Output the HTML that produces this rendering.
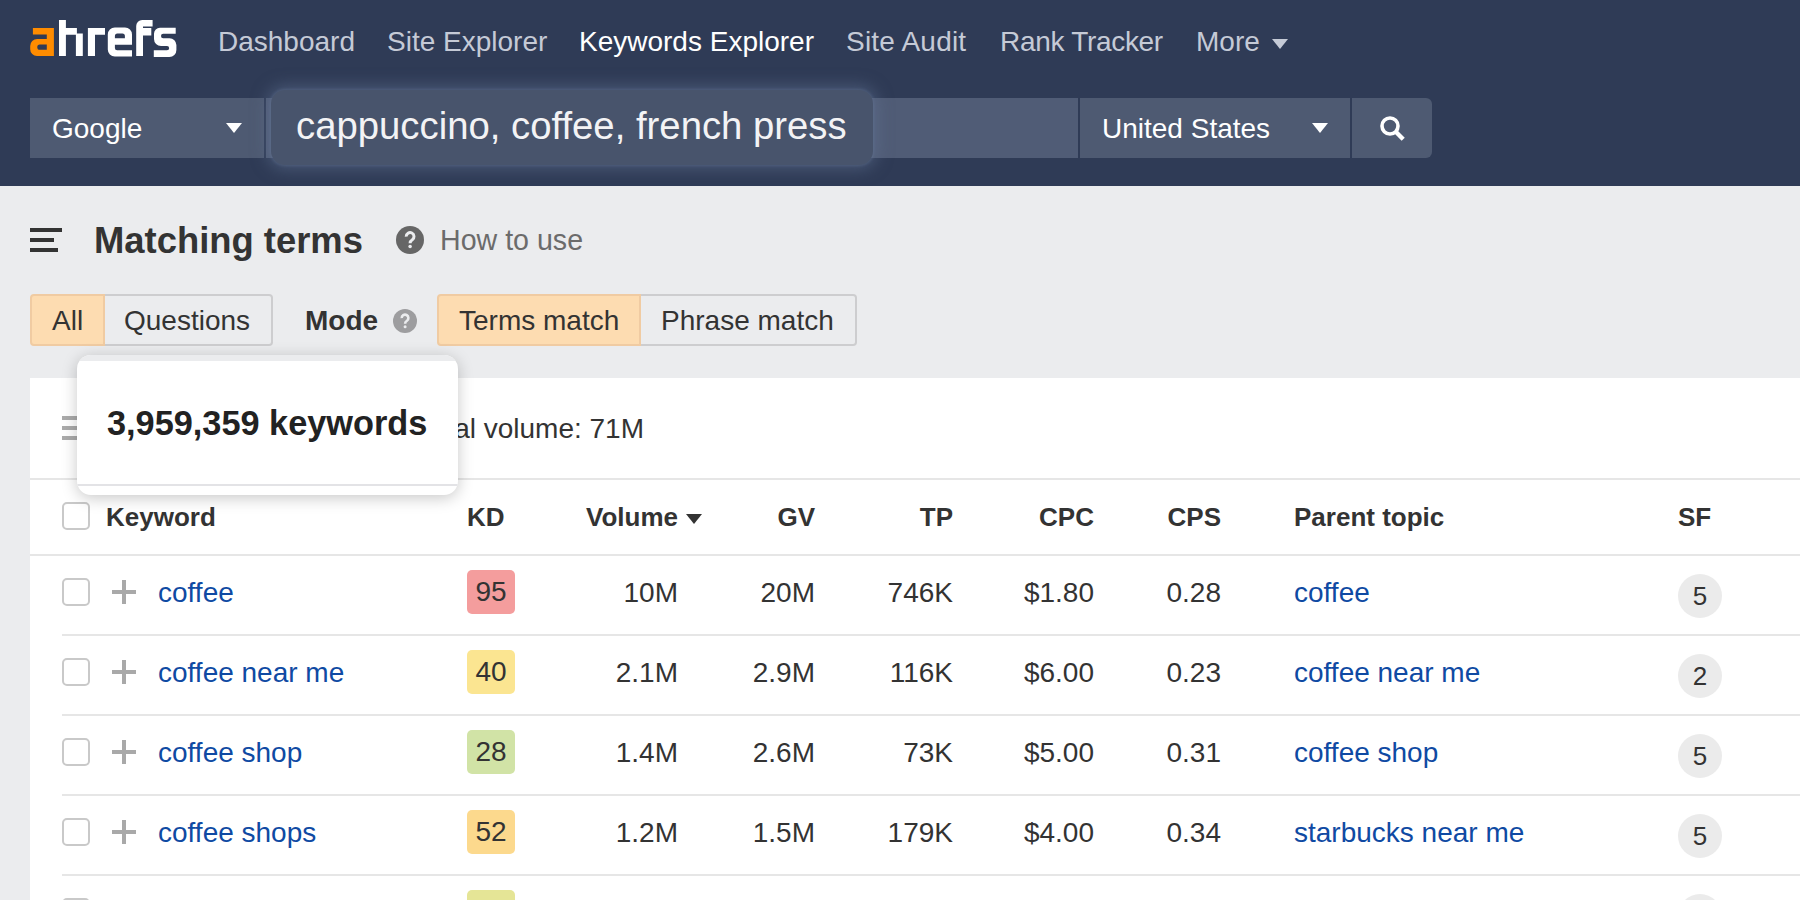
<!DOCTYPE html>
<html><head><meta charset="utf-8">
<style>
*{margin:0;padding:0;box-sizing:border-box}
html,body{width:1800px;height:900px;overflow:hidden;background:#ebecee;font-family:"Liberation Sans",sans-serif}
.t{position:absolute;white-space:nowrap;line-height:normal}
.abs{position:absolute}
#hdr{position:absolute;left:0;top:0;width:1800px;height:186px;background:#2f3b56}
.nav{font-size:28px;color:#c5cad6}
.nav.act{color:#fff}
.tri{position:absolute;width:0;height:0;border-left:8px solid transparent;border-right:8px solid transparent;border-top:10px solid #fff}
.sbox{position:absolute;top:98px;height:60px;background:#4e5a72}
.btn{position:absolute;top:294px;height:52px;border:2px solid #cdcdcf;font-size:28px;color:#333}
.panel{position:absolute;left:30px;top:378px;width:1770px;height:522px;background:#fff}
.hd{font-size:26px;font-weight:bold;color:#333}
.cell{font-size:28px;color:#333}
.lnk{font-size:28px;color:#0f4aa3}
.cb{position:absolute;left:62px;width:28px;height:28px;border:2px solid #c9c9c9;border-radius:5px;background:#fff}
.plus{position:absolute;left:112px;width:24px;height:24px}
.plus:before{content:"";position:absolute;left:10px;top:0;width:4px;height:24px;background:#a9a9a9}
.plus:after{content:"";position:absolute;left:0;top:10px;width:24px;height:4px;background:#a9a9a9}
.kd{position:absolute;left:467px;width:48px;height:44px;border-radius:5px;font-size:28px;color:#333;text-align:center;line-height:44px}
.sf{position:absolute;left:1678px;width:44px;height:44px;border-radius:50%;background:#ebebeb;font-size:26px;color:#333;text-align:center;line-height:44px}
.div{position:absolute;left:62px;width:1738px;height:2px;background:#e6e6e6}
.r{text-align:right}
</style></head>
<body>
<div id="hdr">
  <svg class="abs" style="left:0;top:0" width="200" height="80" viewBox="0 0 200 80">
    <path fill="#ff8c00" fill-rule="evenodd" d="M32.9 28H53.9V56.1H37A6.8 6.8 0 0 1 30.2 49.3V46A7 7 0 0 1 37.2 39H46.8V34.6H32.9Z M39.8 44.6H46.8V49.7H39.8A2.55 2.55 0 0 1 37.25 47.15A2.55 2.55 0 0 1 39.8 44.6Z"/>
    <path fill="#fff" d="M59 19.9H65.9V28H76.9V33.6H82.8V56.1H75.9V34.8H65.9V56.1H59Z M87.9 28H105V34.8H95V56.1H87.9Z"/>
    <path fill="#fff" fill-rule="evenodd" d="M114.8 27.5H125A7 7 0 0 1 132 34.5V44.8H114.9V48A2.2 2.2 0 0 0 117.1 50.2H132V56.6H114.8A7 7 0 0 1 107.8 49.6V34.5A7 7 0 0 1 114.8 27.5Z M117.4 33.6H122.4A2.5 2.5 0 0 1 124.9 36.1V38.2H114.9V36.1A2.5 2.5 0 0 1 117.4 33.6Z"/>
    <path fill="#fff" d="M142.2 19.9H152.6V26.5H143V28H151.3V35.6H143V56.1H136.2V26A6.1 6.1 0 0 1 142.2 19.9Z"/>
    <path fill="#fff" d="M160 27.7H175.7V33.8H163.2A2.2 2.2 0 0 0 161 36A2.2 2.2 0 0 0 163.2 38.2H169.5A6.9 6.9 0 0 1 176.4 45.1V50A7 7 0 0 1 169.4 57H153.8V50.3H167A2.15 2.15 0 0 0 169.15 48.15A2.15 2.15 0 0 0 167 46H161A7 7 0 0 1 154 39V33.7A6 6 0 0 1 160 27.7Z"/>
  </svg>
  <div class="t nav" style="left:218px;top:26.3px">Dashboard</div>
  <div class="t nav" style="left:387px;top:26.3px">Site Explorer</div>
  <div class="t nav act" style="left:579px;top:26.3px">Keywords Explorer</div>
  <div class="t nav" style="left:846px;top:26.3px;letter-spacing:0.2px">Site Audit</div>
  <div class="t nav" style="left:1000px;top:26.3px;letter-spacing:-0.3px">Rank Tracker</div>
  <div class="t nav" style="left:1196px;top:26.3px">More</div>
  <div class="tri" style="left:1272px;top:39px;border-top-color:#c5cad6"></div>

  <div class="sbox" style="left:30px;width:234px"></div>
  <div class="t" style="left:52px;top:113px;font-size:28px;color:#fff">Google</div>
  <div class="tri" style="left:226px;top:123px"></div>
  <div class="sbox" style="left:266px;width:812px;background:#505c76"></div>
  <div class="abs" style="left:271px;top:90px;width:602px;height:75px;background:#48546c;border-radius:14px;box-shadow:0 0 3px 1px rgba(100,118,150,0.4),0 0 16px 4px rgba(100,118,150,0.5)"></div>
  <div class="t" style="left:296px;top:103.5px;font-size:38.3px;color:#f3f3f5">cappuccino, coffee, french press</div>
  <div class="sbox" style="left:1080px;width:270px"></div>
  <div class="t" style="left:1102px;top:113px;font-size:28px;color:#fff">United States</div>
  <div class="tri" style="left:1312px;top:123px"></div>
  <div class="sbox" style="left:1352px;width:80px;border-radius:0 6px 6px 0"></div>
  <svg class="abs" style="left:1376px;top:112px" width="34" height="34" viewBox="0 0 34 34">
    <circle cx="14" cy="14" r="8" fill="none" stroke="#fff" stroke-width="3.6"/>
    <path d="M19.5 19.5L27.2 27.2" stroke="#fff" stroke-width="4.4"/>
  </svg>
</div>

<!-- title row -->
<div class="abs" style="left:30px;top:228px;width:32px;height:4px;background:#333"></div>
<div class="abs" style="left:30px;top:238px;width:24px;height:4px;background:#333"></div>
<div class="abs" style="left:30px;top:248px;width:28px;height:4px;background:#333"></div>
<div class="t" style="left:94px;top:220.4px;font-size:36.4px;font-weight:bold;color:#333">Matching terms</div>
<svg class="abs" style="left:396px;top:226px" width="28" height="28" viewBox="0 0 28 28">
  <circle cx="14" cy="14" r="14" fill="#666"/>
  <path d="M10.2 10.6A3.9 3.9 0 1 1 16.3 13.7C14.9 14.6 14.1 15.3 14.1 17.2" fill="none" stroke="#ebecee" stroke-width="3"/>
  <circle cx="14.1" cy="20.6" r="1.75" fill="#ebecee"/>
</svg>
<div class="t" style="left:440px;top:223.8px;font-size:28.6px;color:#6b6b6b">How to use</div>

<!-- filter row -->
<div class="btn" style="left:30px;width:75px;background:#fddcb1;border-color:#f0cba2;border-radius:4px 0 0 4px"></div>
<div class="btn" style="left:105px;width:168px;border-left:none;border-radius:0 4px 4px 0"></div>
<div class="t" style="left:52px;top:305px;font-size:28px;color:#333">All</div>
<div class="t" style="left:124px;top:305px;font-size:28px;color:#333">Questions</div>
<div class="t" style="left:305px;top:305px;font-size:28px;font-weight:bold;color:#333">Mode</div>
<svg class="abs" style="left:393px;top:309px" width="24" height="24" viewBox="0 0 24 24">
  <circle cx="12" cy="12" r="12" fill="#9d9d9f"/>
  <path d="M8.7 9.1A3.35 3.35 0 1 1 13.95 11.75C12.75 12.5 12.1 13.1 12.1 14.75" fill="none" stroke="#ebecee" stroke-width="2.6"/>
  <circle cx="12.1" cy="17.65" r="1.5" fill="#ebecee"/>
</svg>
<div class="btn" style="left:437px;width:204px;background:#fddcb1;border-color:#f0cba2;border-radius:4px 0 0 4px"></div>
<div class="btn" style="left:641px;width:216px;border-left:none;border-radius:0 4px 4px 0"></div>
<div class="t" style="left:459px;top:305px;font-size:28px;color:#333">Terms match</div>
<div class="t" style="left:661px;top:305px;font-size:28px;color:#333">Phrase match</div>

<!-- panel -->
<div class="panel"></div>
<div class="abs" style="left:62px;top:416px;width:20px;height:4px;background:#aaa"></div>
<div class="abs" style="left:62px;top:426px;width:20px;height:4px;background:#aaa"></div>
<div class="abs" style="left:62px;top:436px;width:20px;height:4px;background:#aaa"></div>
<div class="t" style="right:1156px;top:412.5px;font-size:28px;color:#333">Total volume: 71M</div>
<div class="abs" style="left:30px;top:478px;width:1770px;height:2px;background:#e6e6e6"></div>

<!-- table header -->
<div class="cb" style="top:502px"></div>
<div class="t hd" style="left:106px;top:502px">Keyword</div>
<div class="t hd" style="left:467px;top:502px">KD</div>
<div class="t hd" style="left:586px;top:502px">Volume</div>
<div class="tri" style="left:686px;top:514px;border-top-color:#333"></div>
<div class="t hd r" style="right:985px;top:502px">GV</div>
<div class="t hd r" style="right:847px;top:502px">TP</div>
<div class="t hd r" style="right:706px;top:502px">CPC</div>
<div class="t hd r" style="right:579px;top:502px">CPS</div>
<div class="t hd" style="left:1294px;top:502px">Parent topic</div>
<div class="t hd" style="left:1678px;top:502px">SF</div>
<div class="abs" style="left:30px;top:554px;width:1770px;height:2px;background:#e6e6e6"></div>

<!-- rows -->
<div id="rows">
<div class="cb" style="top:578px"></div>
<div class="plus" style="top:580px"></div>
<div class="t lnk" style="left:158px;top:577.3px">coffee</div>
<div class="kd" style="top:570px;background:#f49d9d">95</div>
<div class="t cell r" style="right:1122px;top:577.3px">10M</div>
<div class="t cell r" style="right:985px;top:577.3px">20M</div>
<div class="t cell r" style="right:847px;top:577.3px">746K</div>
<div class="t cell r" style="right:706px;top:577.3px">$1.80</div>
<div class="t cell r" style="right:579px;top:577.3px">0.28</div>
<div class="t lnk" style="left:1294px;top:577.3px">coffee</div>
<div class="sf" style="top:574px">5</div>
<div class="div" style="top:634px"></div>
<div class="cb" style="top:658px"></div>
<div class="plus" style="top:660px"></div>
<div class="t lnk" style="left:158px;top:657.3px">coffee near me</div>
<div class="kd" style="top:650px;background:#fbe591">40</div>
<div class="t cell r" style="right:1122px;top:657.3px">2.1M</div>
<div class="t cell r" style="right:985px;top:657.3px">2.9M</div>
<div class="t cell r" style="right:847px;top:657.3px">116K</div>
<div class="t cell r" style="right:706px;top:657.3px">$6.00</div>
<div class="t cell r" style="right:579px;top:657.3px">0.23</div>
<div class="t lnk" style="left:1294px;top:657.3px">coffee near me</div>
<div class="sf" style="top:654px">2</div>
<div class="div" style="top:714px"></div>
<div class="cb" style="top:738px"></div>
<div class="plus" style="top:740px"></div>
<div class="t lnk" style="left:158px;top:737.3px">coffee shop</div>
<div class="kd" style="top:730px;background:#d1e3a6">28</div>
<div class="t cell r" style="right:1122px;top:737.3px">1.4M</div>
<div class="t cell r" style="right:985px;top:737.3px">2.6M</div>
<div class="t cell r" style="right:847px;top:737.3px">73K</div>
<div class="t cell r" style="right:706px;top:737.3px">$5.00</div>
<div class="t cell r" style="right:579px;top:737.3px">0.31</div>
<div class="t lnk" style="left:1294px;top:737.3px">coffee shop</div>
<div class="sf" style="top:734px">5</div>
<div class="div" style="top:794px"></div>
<div class="cb" style="top:818px"></div>
<div class="plus" style="top:820px"></div>
<div class="t lnk" style="left:158px;top:817.3px">coffee shops</div>
<div class="kd" style="top:810px;background:#fcd98d">52</div>
<div class="t cell r" style="right:1122px;top:817.3px">1.2M</div>
<div class="t cell r" style="right:985px;top:817.3px">1.5M</div>
<div class="t cell r" style="right:847px;top:817.3px">179K</div>
<div class="t cell r" style="right:706px;top:817.3px">$4.00</div>
<div class="t cell r" style="right:579px;top:817.3px">0.34</div>
<div class="t lnk" style="left:1294px;top:817.3px">starbucks near me</div>
<div class="sf" style="top:814px">5</div>
<div class="div" style="top:874px"></div>
<div class="cb" style="top:898px"></div>
<div class="plus" style="top:900px"></div>
<div class="t lnk" style="left:158px;top:897.3px">coffee grinder</div>
<div class="kd" style="top:890px;background:#e5e596">33</div>
<div class="t cell r" style="right:1122px;top:897.3px">450K</div>
<div class="t cell r" style="right:985px;top:897.3px">1.1M</div>
<div class="t cell r" style="right:847px;top:897.3px">88K</div>
<div class="t cell r" style="right:706px;top:897.3px">$1.50</div>
<div class="t cell r" style="right:579px;top:897.3px">1.12</div>
<div class="t lnk" style="left:1294px;top:897.3px">coffee grinder</div>
<div class="sf" style="top:894px">4</div>
<div class="div" style="top:954px"></div>
</div>

<!-- popup -->
<div class="abs" style="left:77px;top:355px;width:381px;height:140px;border-radius:14px;background:#fff;overflow:hidden;box-shadow:0 3px 16px rgba(0,0,0,0.22)">
  <div class="abs" style="left:0;top:0;width:381px;height:6px;background:#ebecee"></div>
  <div class="abs" style="left:0;top:129px;width:381px;height:2px;background:#e3e3e6"></div>
  <div class="t" style="left:30px;top:404px;margin-top:-355px;font-size:34.3px;font-weight:bold;color:#222">3,959,359 keywords</div>
</div>
</body></html>
